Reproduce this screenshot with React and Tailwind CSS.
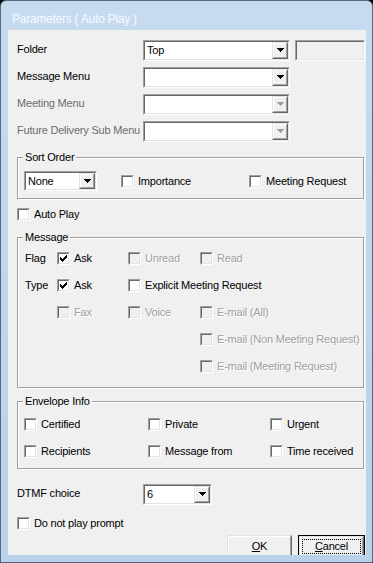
import React from 'react';

const sunkenOuter = 'border border-t-[#a0a0a0] border-l-[#a0a0a0] border-r-white border-b-white';
const sunkenInner = 'border border-t-[#696969] border-l-[#696969] border-r-[#e3e3e3] border-b-[#e3e3e3]';
const raisedOuter = 'border border-t-[#e3e3e3] border-l-[#e3e3e3] border-r-[#696969] border-b-[#696969]';
const raisedInner = 'border border-t-white border-l-white border-r-[#a0a0a0] border-b-[#a0a0a0]';

const Arrow = ({ color = '#000' }) => (
    <svg width="7" height="4" viewBox="0 0 7 4" shapeRendering="crispEdges" className="block">
        <rect x="0" y="0" width="7" height="1" fill={color} />
        <rect x="1" y="1" width="5" height="1" fill={color} />
        <rect x="2" y="2" width="3" height="1" fill={color} />
        <rect x="3" y="3" width="1" height="1" fill={color} />
    </svg>
);

const Tick = () => (
    <svg width="7" height="7" viewBox="0 0 7 7" shapeRendering="crispEdges" className="block">
        {[[0, 2], [1, 3], [2, 4], [3, 3], [4, 2], [5, 1], [6, 0]].map(([x, y]) => (
            <rect key={x} x={x} y={y} width="1" height="3" fill="#000" />
        ))}
    </svg>
);

const Check = ({ checked, disabled }) => (
    <div className={`size-[13px] shrink-0 ${sunkenOuter}`}>
        <div className={`size-full p-[1px] ${sunkenInner} ${disabled ? 'bg-[#f0f0f0]' : 'bg-white'}`}>
            {checked && <Tick />}
        </div>
    </div>
);

const CheckItem = ({ label, checked, disabled, className = '' }) => (
    <div className={`flex h-[13px] items-center ${className}`}>
        <Check checked={checked} disabled={disabled} />
        <span className={`ml-[4px] whitespace-nowrap ${disabled ? 'text-[#a0a0a0] [text-shadow:1px_1px_0_#fff]' : ''}`}>
            {label}
        </span>
    </div>
);

const Combo = ({ size, value, disabled }) => (
    <div className={`shrink-0 ${size} ${sunkenOuter}`}>
        <div className={`flex size-full bg-white ${sunkenInner}`}>
            <div className="flex flex-1 items-center overflow-hidden pl-[2px]">{value}</div>
            <div className={`h-full w-[16px] ${raisedOuter}`}>
                <div className={`size-full bg-[#f0f0f0] pl-[3px] pt-[4px] ${raisedInner}`}>
                    <Arrow color={disabled ? '#a0a0a0' : '#000'} />
                </div>
            </div>
        </div>
    </div>
);

const GroupBox = ({ title, className, children }) => (
    <div className={`relative w-[347px] border border-[#a0a0a0] shadow-[inset_1px_1px_0_#fff,1px_1px_0_#fff] ${className}`}>
        <span className="absolute left-[5px] top-[-8px] bg-[#f0f0f0] px-[2px] leading-[14px]">{title}</span>
        {children}
    </div>
);

const MenuRow = ({ label, value, disabled, className = '', children }) => (
    <div className={`flex h-[21px] ${className}`}>
        <div className={`w-[126px] shrink-0 whitespace-nowrap pt-[3px] ${disabled ? 'text-[#6d6d6d]' : ''}`}>{label}</div>
        <Combo size="w-[147px] h-[21px]" value={value} disabled={disabled} />
        {children}
    </div>
);

const App = () => {
    return (
        <div className="h-[563px] w-[373px] bg-black font-['Liberation_Sans',Arial,sans-serif] text-[11px] leading-[13px] tracking-[-0.2px] text-black">
            <div className="flex h-full flex-col rounded-t-[6px] border border-[#56687e] bg-linear-to-b from-[#c7dbf0] to-[#b9d1ea] pb-[7px] pl-[7px] pr-[6px]">
                {/* Title bar */}
                <div className="h-[29px] shrink-0 pl-[4px] pt-[11px] text-[12px] leading-[14px] tracking-[-0.25px] text-[#f7faff]">
                    Parameters ( Auto Play )
                </div>

                {/* Client area */}
                <div className="min-h-0 flex-1 overflow-hidden bg-[#f0f0f0] pl-[9px]">
                    <MenuRow label="Folder" value="Top" className="mt-[10px]">
                        <div className={`ml-[5px] h-[21px] w-[70px] ${sunkenOuter}`}>
                            <div className={`size-full bg-[#f0f0f0] ${sunkenInner}`} />
                        </div>
                    </MenuRow>
                    <MenuRow label="Message Menu" className="mt-[6px]" />
                    <MenuRow label="Meeting Menu" disabled className="mt-[6px]" />
                    <MenuRow label="Future Delivery Sub Menu" disabled className="mt-[6px]" />

                    {/* Sort Order */}
                    <GroupBox title="Sort Order" className="mt-[15px] h-[42px] pl-[6px] pt-[13px]">
                        <div className="flex h-[20px] items-center">
                            <Combo size="w-[73px] h-[20px]" value="None" />
                            <CheckItem label="Importance" className="ml-[24px] w-[128px]" />
                            <CheckItem label="Meeting Request" />
                        </div>
                    </GroupBox>

                    <CheckItem label="Auto Play" className="mt-[9px]" />

                    {/* Message */}
                    <GroupBox title="Message" className="mt-[16px] h-[151px] pl-[7px] pt-[14px]">
                        <div className="flex flex-col gap-[14px]">
                            <div className="flex h-[13px] items-center">
                                <span className="w-[32px] shrink-0">Flag</span>
                                <CheckItem label="Ask" checked className="w-[71px]" />
                                <CheckItem label="Unread" disabled className="w-[72px]" />
                                <CheckItem label="Read" disabled />
                            </div>
                            <div className="flex h-[13px] items-center">
                                <span className="w-[32px] shrink-0">Type</span>
                                <CheckItem label="Ask" checked className="w-[71px]" />
                                <CheckItem label="Explicit Meeting Request" />
                            </div>
                            <div className="flex h-[13px] items-center pl-[32px]">
                                <CheckItem label="Fax" disabled className="w-[71px]" />
                                <CheckItem label="Voice" disabled className="w-[72px]" />
                                <CheckItem label="E-mail (All)" disabled />
                            </div>
                            <div className="flex h-[13px] items-center pl-[175px]">
                                <CheckItem label="E-mail (Non Meeting Request)" disabled />
                            </div>
                            <div className="flex h-[13px] items-center pl-[175px]">
                                <CheckItem label="E-mail (Meeting Request)" disabled />
                            </div>
                        </div>
                    </GroupBox>

                    {/* Envelope Info */}
                    <GroupBox title="Envelope Info" className="mt-[13px] h-[68px] pl-[6px] pt-[16px]">
                        <div className="flex flex-col gap-[14px]">
                            <div className="flex h-[13px] items-center">
                                <CheckItem label="Certified" className="w-[124px]" />
                                <CheckItem label="Private" className="w-[122px]" />
                                <CheckItem label="Urgent" />
                            </div>
                            <div className="flex h-[13px] items-center">
                                <CheckItem label="Recipients" className="w-[124px]" />
                                <CheckItem label="Message from" className="w-[122px]" />
                                <CheckItem label="Time received" />
                            </div>
                        </div>
                    </GroupBox>

                    <div className="mt-[15px] flex h-[21px]">
                        <div className="w-[126px] shrink-0 pt-[3px]">DTMF choice</div>
                        <Combo size="w-[69px] h-[21px]" value="6" />
                    </div>

                    <CheckItem label="Do not play prompt" className="mt-[12px]" />

                    {/* Buttons */}
                    <div className="mt-[5px] flex justify-end gap-[6px] pr-[1px]">
                        <div className={`h-[23px] w-[65px] ${raisedOuter}`}>
                            <div className={`flex size-full items-center justify-center bg-[#f0f0f0] ${raisedInner}`}>
                                <span><span className="underline underline-offset-[1px]">O</span>K</span>
                            </div>
                        </div>
                        <div className="h-[23px] w-[67px] border border-black">
                            <div className={`size-full ${raisedOuter}`}>
                                <div className={`size-full bg-[#f0f0f0] p-[1px] ${raisedInner}`}>
                                    <div className="flex size-full items-center justify-center border border-dotted border-black">
                                        <span><span className="underline underline-offset-[1px]">C</span>ancel</span>
                                    </div>
                                </div>
                            </div>
                        </div>
                    </div>
                </div>
            </div>
        </div>
    );
};

export default App;
